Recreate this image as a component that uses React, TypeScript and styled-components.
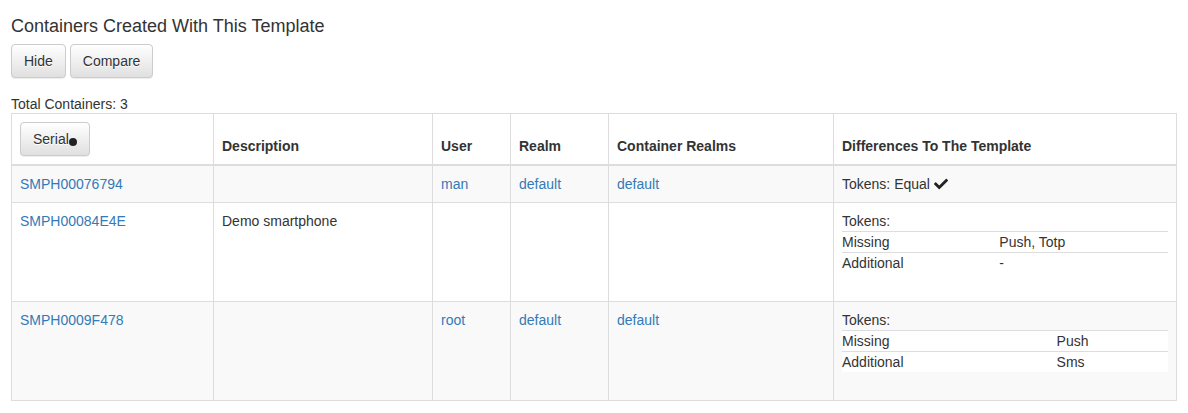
import React from "react";
import styled, { createGlobalStyle } from "styled-components";
import { FaCheck } from "react-icons/fa";

const GlobalStyle = createGlobalStyle`
  html, body { margin: 0; padding: 0; background: #fff; }
  body {
    font-family: "Liberation Sans", Arial, Helvetica, sans-serif;
    font-size: 14px;
    line-height: 20px;
    color: #333;
  }
  * { box-sizing: border-box; }
`;

const Page = styled.div`
  padding: 17px 12px 12px 11px;
`;

const Title = styled.h4`
  margin: 0 0 7px;
  font-size: 18px;
  line-height: 19.8px;
  font-weight: 500;
  color: #333;
`;

const ButtonBar = styled.div`
  display: flex;
  gap: 4px;
  margin-bottom: 16px;
`;

const Button = styled.button`
  display: inline-flex;
  align-items: center;
  font-family: inherit;
  font-size: 14px;
  line-height: 20px;
  color: #333;
  padding: 6px 12px;
  border: 1px solid #ccc;
  border-radius: 4px;
  background-image: linear-gradient(to bottom, #fff 0%, #e0e0e0 100%);
  text-shadow: 0 1px 0 #fff;
  box-shadow: inset 0 1px 0 rgba(255, 255, 255, 0.15), 0 1px 1px rgba(0, 0, 0, 0.075);
  cursor: pointer;
`;

const SortDot = styled.span`
  display: inline-block;
  width: 8px;
  height: 8px;
  border-radius: 50%;
  background: #222;
  margin-top: 6px;
`;

const Total = styled.div`
  font-size: 14px;
  line-height: 20px;
  margin-bottom: -1px;
`;

const Table = styled.table`
  width: 1165px;
  table-layout: fixed;
  border-collapse: collapse;
  border-spacing: 0;
  border: 1px solid #ddd;
`;

const HeadCell = styled.th`
  text-align: left;
  vertical-align: bottom;
  padding: 8px;
  font-weight: bold;
  line-height: 20px;
  border: 1px solid #ddd;
  border-bottom: 2px solid #ddd;
  border-top: 0;
`;

const Row = styled.tr<{ $striped?: boolean }>`
  background: ${(p) => (p.$striped ? "#f9f9f9" : "#fff")};
`;

const Cell = styled.td`
  vertical-align: top;
  padding: 8px;
  line-height: 20px;
  border: 1px solid #ddd;
`;

const Link = styled.a`
  color: #337ab7;
  text-decoration: none;
`;

const Check = styled(FaCheck)`
  width: 14px;
  height: 14px;
  vertical-align: -2px;
  margin-left: 4px;
  color: #222;
`;

const DiffTable = styled.table`
  width: 100%;
  border-collapse: collapse;
  background: #fff;
  margin-bottom: 20px;
`;

const DiffCell = styled.td`
  padding: 0;
  line-height: 20px;
  border-top: 1px solid #ddd;
  vertical-align: top;
`;

type Diff = { missing: string; additional: string };

const TokenDiff = ({ diff }: { diff: Diff }) => (
  <>
    <div>Tokens:</div>
    <DiffTable>
      <tbody>
        <tr>
          <DiffCell>Missing</DiffCell>
          <DiffCell>{diff.missing}</DiffCell>
        </tr>
        <tr>
          <DiffCell>Additional</DiffCell>
          <DiffCell>{diff.additional}</DiffCell>
        </tr>
      </tbody>
    </DiffTable>
  </>
);

type Container = {
  serial: string;
  description: string;
  user: string;
  realm: string;
  containerRealms: string;
  diff: Diff | null;
};

const rows: Container[] = [
  { serial: "SMPH00076794", description: "", user: "man", realm: "default", containerRealms: "default", diff: null },
  { serial: "SMPH00084E4E", description: "Demo smartphone", user: "", realm: "", containerRealms: "", diff: { missing: "Push, Totp", additional: "-" } },
  { serial: "SMPH0009F478", description: "", user: "root", realm: "default", containerRealms: "default", diff: { missing: "Push", additional: "Sms" } },
];

export default function App() {
  return (
    <>
      <GlobalStyle />
      <Page>
        <Title>Containers Created With This Template</Title>
        <ButtonBar>
          <Button>Hide</Button>
          <Button>Compare</Button>
        </ButtonBar>
        <Total>Total Containers: 3</Total>
        <Table>
          <colgroup>
            <col style={{ width: 202 }} />
            <col style={{ width: 219 }} />
            <col style={{ width: 78 }} />
            <col style={{ width: 98 }} />
            <col style={{ width: 225 }} />
            <col style={{ width: 343 }} />
          </colgroup>
          <thead>
            <tr>
              <HeadCell>
                <Button>
                  Serial
                  <SortDot />
                </Button>
              </HeadCell>
              <HeadCell>Description</HeadCell>
              <HeadCell>User</HeadCell>
              <HeadCell>Realm</HeadCell>
              <HeadCell>Container Realms</HeadCell>
              <HeadCell>Differences To The Template</HeadCell>
            </tr>
          </thead>
          <tbody>
            {rows.map((r, i) => (
              <Row key={r.serial} $striped={i % 2 === 0}>
                <Cell>
                  <Link href="#">{r.serial}</Link>
                </Cell>
                <Cell>{r.description}</Cell>
                <Cell>{r.user && <Link href="#">{r.user}</Link>}</Cell>
                <Cell>{r.realm && <Link href="#">{r.realm}</Link>}</Cell>
                <Cell>{r.containerRealms && <Link href="#">{r.containerRealms}</Link>}</Cell>
                <Cell>
                  {r.diff ? (
                    <TokenDiff diff={r.diff} />
                  ) : (
                    <>
                      Tokens: Equal
                      <Check />
                    </>
                  )}
                </Cell>
              </Row>
            ))}
          </tbody>
        </Table>
      </Page>
    </>
  );
}
